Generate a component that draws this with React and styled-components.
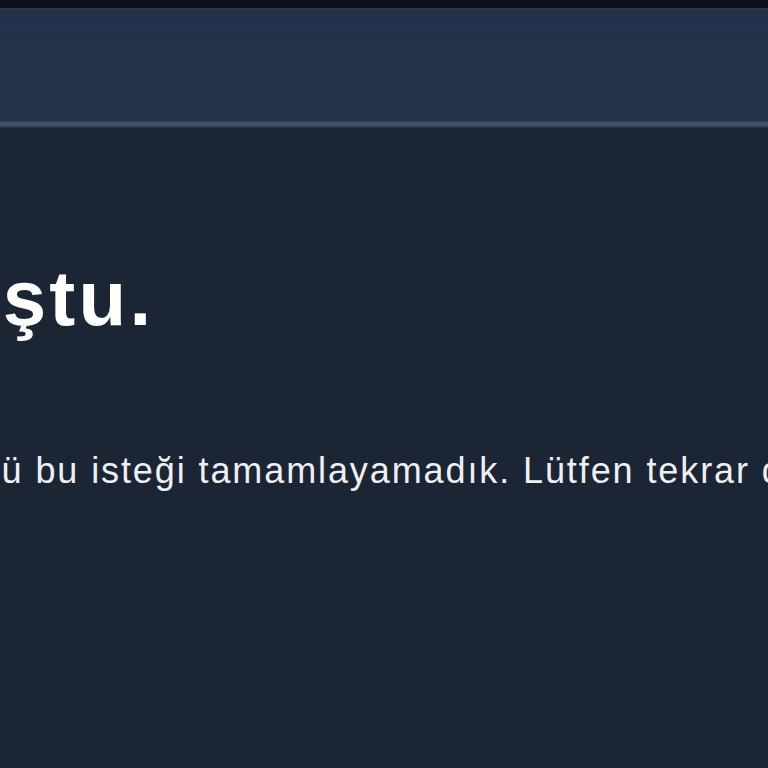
import React from 'react'
import styled, { createGlobalStyle } from 'styled-components'

const GlobalStyle = createGlobalStyle`
  html, body {
    margin: 0;
    padding: 0;
    background-color: #1c2533;
    overflow: hidden;
  }
  body {
    font-family: 'Liberation Sans', Arial, sans-serif;
  }
`

const Page = styled.div`
  display: flex;
  flex-direction: column;
  min-height: 768px;
  width: 768px;
  overflow: hidden;
  background-color: #1c2533;
`

const TopStrip = styled.div`
  height: 8px;
  background-color: #0c101b;
`

const Header = styled.header`
  height: 113px;
  background: linear-gradient(
    to bottom,
    #323a4b 0,
    #2a3344 2px,
    #22324a 4px,
    #233250 20px,
    #22334a 30px,
    #22334a 100%
  );
`

const HeaderRule = styled.div`
  height: 7px;
  background: linear-gradient(
    to bottom,
    #2c3849 0,
    #45536a 2px,
    #4b586b 3px,
    #3c4859 5px,
    #222c3b 7px
  );
`

const Main = styled.main`
  flex: 1;
  display: flex;
  flex-direction: column;
  padding-top: 131px;
  margin-left: -${props => props.offset}px;
`

const Title = styled.h1`
  margin: 0;
  font-size: 78px;
  line-height: 1;
  font-weight: 700;
  letter-spacing: 3.3px;
  color: #ffffff;
  white-space: nowrap;
`

const Message = styled.p`
  margin: 116px 0 0;
  font-size: 36px;
  line-height: 1;
  letter-spacing: 1.9px;
  color: #edf0f4;
  white-space: nowrap;
`

const App = () => (
  <>
    <GlobalStyle />
    <Page>
      <TopStrip />
      <Header />
      <HeaderRule />
      <Main offset={466}>
        <Title>Bir hata oluştu.</Title>
        <Message>
          Bir sistem hatasından ötürü bu isteği tamamlayamadık. Lütfen tekrar deneyin.
        </Message>
      </Main>
    </Page>
  </>
)

export default App
